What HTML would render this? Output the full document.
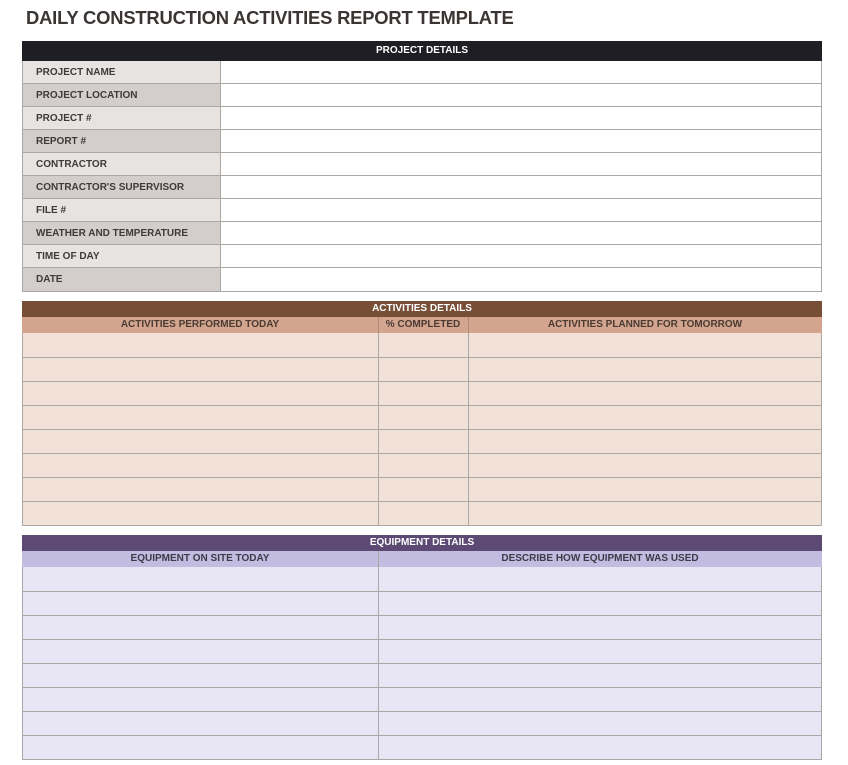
<!DOCTYPE html>
<html><head><meta charset="utf-8"><style>
body{margin:0;width:848px;height:765px;background:#fff;font-family:"Liberation Sans",sans-serif;position:relative;overflow:hidden}
.a{position:absolute;box-sizing:border-box}
h1{position:absolute;left:26px;top:7px;margin:0;font-size:18.4px;font-weight:bold;color:#3a3532;letter-spacing:-0.2px}
.t{font-size:10px;font-weight:bold;color:#3e3a38}
.c{text-align:center}
</style></head><body>
<h1>DAILY CONSTRUCTION ACTIVITIES REPORT TEMPLATE</h1>

<div class="a t c" style="left:22px;top:41px;width:800px;height:20px;background:#1e1e24;color:#fff;font-size:10px;line-height:20px">PROJECT DETAILS</div>
<div class="a" style="left:22px;top:61px;width:800px;height:231px;border:1px solid #a8a8a8;border-top:none"></div>

<div class="a t c" style="left:22px;top:301px;width:800px;height:16px;background:#774e36;color:#fff;font-size:10px;line-height:16px">ACTIVITIES DETAILS</div>
<div class="a" style="left:22px;top:317px;width:800px;height:16px;background:#d3a58f"></div>
<div class="a t c" style="left:22px;top:317px;width:356px;line-height:16px;font-size:10px;color:#4a3a32">ACTIVITIES PERFORMED TODAY</div>
<div class="a t c" style="left:378px;top:317px;width:90px;line-height:16px;font-size:10px;color:#4a3a32">% COMPLETED</div>
<div class="a t c" style="left:468px;top:317px;width:354px;line-height:16px;font-size:10px;color:#4a3a32">ACTIVITIES PLANNED FOR TOMORROW</div>
<div class="a" style="left:378px;top:317px;width:1px;height:16px;background:#b08a78"></div>
<div class="a" style="left:468px;top:317px;width:1px;height:16px;background:#b08a78"></div>
<div class="a" style="left:22px;top:333px;width:800px;height:193px;background:#f1e1d7;border:1px solid #a8a8a8;border-top:none"></div>
<div class="a" style="left:378px;top:333px;width:1px;height:192px;background:#a8a8a8"></div>
<div class="a" style="left:468px;top:333px;width:1px;height:192px;background:#a8a8a8"></div>

<div class="a t c" style="left:22px;top:535px;width:800px;height:16px;background:#5c4a74;color:#fff;font-size:10px;line-height:16px">EQUIPMENT DETAILS</div>
<div class="a" style="left:22px;top:551px;width:800px;height:16px;background:#c1bce0"></div>
<div class="a t c" style="left:22px;top:551px;width:356px;line-height:16px;font-size:10px;color:#3e3a48">EQUIPMENT ON SITE TODAY</div>
<div class="a t c" style="left:378px;top:551px;width:444px;line-height:16px;font-size:10px;color:#3e3a48">DESCRIBE HOW EQUIPMENT WAS USED</div>
<div class="a" style="left:22px;top:567px;width:800px;height:193px;background:#e8e6f5;border:1px solid #a8a8a8;border-top:none"></div>
<div class="a" style="left:378px;top:551px;width:1px;height:208px;background:#a8a8a8"></div>

<div id="pd"></div>
<script>
var L=["PROJECT NAME","PROJECT LOCATION","PROJECT #","REPORT #","CONTRACTOR","CONTRACTOR'S SUPERVISOR","FILE #","WEATHER AND TEMPERATURE","TIME OF DAY","DATE"];
var h="";
for(var i=0;i<10;i++){var y=61+i*23;
h+='<div class="a t" style="left:23px;top:'+y+'px;width:197px;height:23px;background:'+(i%2?'#d3cecb':'#e7e3e1')+';line-height:23px;padding-left:13px">'+L[i]+'</div>';
if(i<9)h+='<div class="a" style="left:22px;top:'+(y+22)+'px;width:800px;height:1px;background:#a8a8a8"></div>';}
h+='<div class="a" style="left:220px;top:61px;width:1px;height:230px;background:#a8a8a8"></div>';
for(var i=1;i<8;i++){h+='<div class="a" style="left:22px;top:'+(333+i*24)+'px;width:800px;height:1px;background:#a8a8a8"></div>';
h+='<div class="a" style="left:22px;top:'+(567+i*24)+'px;width:800px;height:1px;background:#a8a8a8"></div>';}
document.getElementById("pd").outerHTML=h;
</script>
</body></html>
